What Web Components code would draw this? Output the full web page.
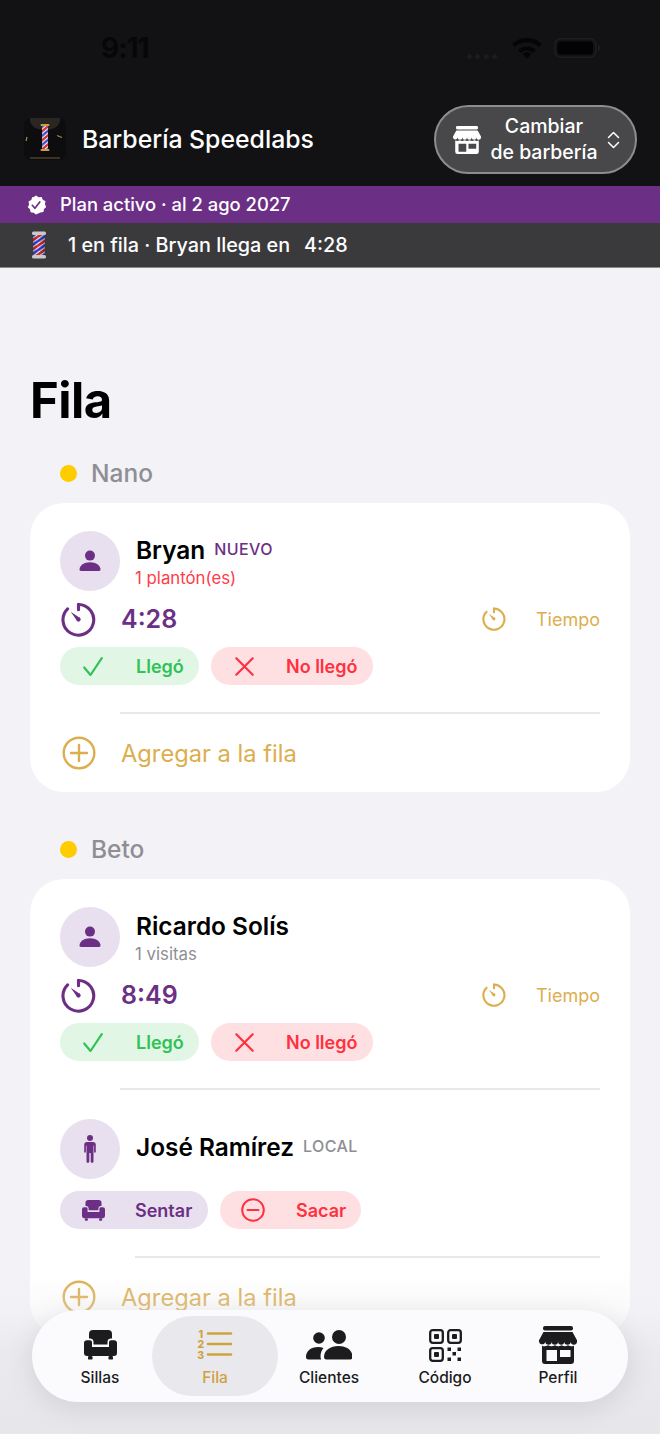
<!doctype html>
<html lang="es"><head><meta charset="utf-8"><title>Fila</title>
<style>
html,body{margin:0;padding:0;background:#f2f2f7}
body{width:660px;height:1434px;overflow:hidden;position:relative;font-family:Inter,"Liberation Sans",sans-serif}
</style></head><body>
<app-shell></app-shell>
<script>
const I={
 store:(c)=>`<svg viewBox="0 0 38 38" width="100%" height="100%" fill="${c}"><rect x="4" y="0" width="30" height="4.600" rx="2"/><path d="M4.500 6h29l4.500 8.200v1.300a3.150 3.150 0 0 1-6.300 0 3.150 3.150 0 0 1-6.350 0 3.150 3.150 0 0 1-6.300 0 3.150 3.150 0 0 1-6.350 0 3.150 3.150 0 0 1-6.350 0 3.200 3.200 0 0 1-6.350 0v-1.300z"/><path fill-rule="evenodd" d="M3 19.700c2.200 1 4.200.7 6-.5 2.400 1.500 4.700 1.500 7 0 2 1.500 4.400 1.500 6.500 0 2.200 1.500 4.500 1.500 6.500 0 1.800 1.200 3.800 1.500 6 .5V35a3 3 0 0 1-3 3H6a3 3 0 0 1-3-3zM7.500 24v11h10.500V24zM21 24v7h10.500v-7z"/></svg>`,
 person:`<svg viewBox="0 0 22 22" width="22" height="22" fill="#6b3085"><circle cx="11" cy="5.600" r="5"/><path d="M.5 19.600C.5 15.500 5 12.300 11 12.300s10.500 3.200 10.500 7.300c0 1-.5 1.400-1.500 1.400H2c-1 0-1.500-.4-1.500-1.400z"/></svg>`,
 figure:`<svg viewBox="0 0 12 28" width="12" height="28" fill="#6b3085"><circle cx="6" cy="3" r="3"/><path d="M2.800 7h6.400A2.500 2.500 0 0 1 11.800 9.500v7.300c0 1.300-1.700 1.300-1.700 0v-6h-.6V26.600c0 1.800-2.800 1.800-2.800 0V18h-1.400v8.600c0 1.800-2.800 1.800-2.800 0V10.800h-.6v6c0 1.300-1.700 1.300-1.700 0V9.500A2.500 2.500 0 0 1 2.800 7z"/></svg>`,
 timer:(c,s)=>`<svg viewBox="0 0 36 36" width="${s}" height="${s}" fill="none" stroke="${c}" stroke-width="3.200" stroke-linecap="round"><path d="M18 2.500A15.800 15.800 0 1 1 6.800 7"/><path d="M18 2.500V8"/><circle cx="18" cy="18" r="2.200" fill="${c}" stroke="none"/><path d="M10 10l9.600 6.500-3 3z" fill="${c}" stroke="none"/></svg>`,
 check:`<svg viewBox="0 0 20 19" width="20" height="19" fill="none" stroke="#30c257" stroke-width="2.200" stroke-linecap="round" stroke-linejoin="round"><path d="M1.200 10.500l6.300 7.500L18.800 1.200"/></svg>`,
 x:`<svg viewBox="0 0 19 19" width="19" height="19" fill="none" stroke="#ff3040" stroke-width="2.200" stroke-linecap="round"><path d="M1.300 1.300l16.400 16.400M17.700 1.300L1.300 17.700"/></svg>`,
 minus:`<svg viewBox="0 0 24 24" width="24" height="24" fill="none" stroke="#ff3040" stroke-width="2"><circle cx="12" cy="12" r="10.800"/><path d="M6.500 12h11" stroke-linecap="round"/></svg>`,
 plus:(c)=>`<svg viewBox="0 0 34 34" width="34" height="34" fill="none" stroke="${c}" stroke-width="2.400"><circle cx="17" cy="17" r="15.300"/><path d="M17 9v16M9 17h16" stroke-linecap="round"/></svg>`,
 sofa:(c,w,h)=>`<svg viewBox="0 0 33 30" width="${w}" height="${h}" fill="${c}"><path d="M9 0h15a4 4 0 0 1 4 4v4.500h-1.500a3.500 3.500 0 0 0-3 3.500v2.500H9.500V12a3.500 3.500 0 0 0-3-3.500H5V4a4 4 0 0 1 4-4z"/><path d="M3 10.300h3a2 2 0 0 1 2 2V17h17v-4.700a2 2 0 0 1 2-2h3a3 3 0 0 1 3 3V23a3 3 0 0 1-3 3H3a3 3 0 0 1-3-3V13.300a3 3 0 0 1 3-3z"/><rect x="4" y="26" width="4.500" height="3.600" rx="1.200"/><rect x="24.500" y="26" width="4.500" height="3.600" rx="1.200"/></svg>`,
 list:`<svg viewBox="0 0 36 32" width="36" height="32"><g fill="none" stroke="#cfa23f" stroke-width="2.600" stroke-linecap="round"><path d="M11 4.500h23M11 15h23M11 25.500h23"/></g><g fill="#cfa23f" font-family="Inter,sans-serif" font-weight="800" font-size="10.500" text-anchor="middle"><text x="3.800" y="8.500">1</text><text x="3.800" y="19">2</text><text x="3.800" y="29.500">3</text></g></svg>`,
 people:`<svg viewBox="0 0 46 30" width="46" height="30" fill="#1c1c1e"><circle cx="33" cy="7" r="7"/><path d="M18 27c0-7 6.500-11 14.500-11S46.500 20 46.500 27c0 1.600-.8 2.500-2.500 2.500H20.500C18.800 29.500 18 28.600 18 27z"/><circle cx="13" cy="8" r="5.800"/><path d="M0 27c0-6 5-10 12-10 2.100 0 3.900.3 5.500 1-1.800 2-3 5-3 8.500 0 1 .2 2.200.7 3H2.500C.8 29.500 0 28.600 0 27z"/></svg>`,
 qr:`<svg viewBox="0 0 33 33" width="33" height="33"><g fill="none" stroke="#1c1c1e" stroke-width="2.300"><rect x="1.200" y="1.200" width="12.600" height="12.600" rx="2.500"/><rect x="19.200" y="1.200" width="12.600" height="12.600" rx="2.500"/><rect x="1.200" y="19.200" width="12.600" height="12.600" rx="2.500"/></g><g fill="#1c1c1e"><rect x="5" y="5" width="5" height="5" rx="1"/><rect x="23" y="5" width="5" height="5" rx="1"/><rect x="5" y="23" width="5" height="5" rx="1"/><rect x="18.500" y="18.500" width="3.500" height="3.500"/><rect x="28.500" y="18.500" width="3.500" height="3.500"/><rect x="23.500" y="23" width="3.500" height="3.500"/><rect x="18.500" y="28.500" width="3.500" height="3.500"/><rect x="28.500" y="28.500" width="3.500" height="3.500"/></g></svg>`,
 pole:`<svg viewBox="0 0 16 28" width="16" height="28"><defs><pattern id="st" width="12" height="9" patternUnits="userSpaceOnUse" patternTransform="skewY(-35)"><rect width="12" height="9" fill="#f2f2f2"/><rect y="0" width="12" height="3" fill="#e02a2a"/><rect y="4.500" width="12" height="3" fill="#2636e0"/></pattern><linearGradient id="sh" x1="0" x2="1" y1="0" y2="0"><stop offset="0" stop-color="#000" stop-opacity=".3"/><stop offset=".4" stop-color="#000" stop-opacity="0"/><stop offset="1" stop-color="#000" stop-opacity=".35"/></linearGradient></defs><rect x="2" y="3" width="12" height="22" fill="url(#st)"/><rect x="2" y="3" width="12" height="22" fill="url(#sh)"/><rect x="1" y="0.500" width="14" height="3.500" rx="1.500" fill="#c9c9cc"/><rect x="1" y="24" width="14" height="3.500" rx="1.500" fill="#c9c9cc"/></svg>`,
 logo:`<svg viewBox="0 0 42 42" width="42" height="42"><rect width="42" height="42" rx="7" fill="#0d0d0f"/><path d="M6 0h30c1 7-5 12-15 12S5 7 6 0z" fill="#2a2621"/><rect x="6" y="39.500" width="30" height="1" fill="#6b5a30"/><path d="M3 19l-1 4M33 17.500l5 2" stroke="#a98a3c" stroke-width="1.200" fill="none"/><defs><pattern id="lg" width="6" height="9" patternUnits="userSpaceOnUse" patternTransform="skewY(-40)"><rect width="6" height="9" fill="#eee"/><rect y="0" width="6" height="3" fill="#d8333a"/><rect y="4.500" width="6" height="3" fill="#3450c8"/></pattern></defs><rect x="18" y="7" width="6" height="25" fill="url(#lg)"/><rect x="16.500" y="6" width="9" height="2" rx="1" fill="#c9a040"/><rect x="16.500" y="31" width="9" height="2" rx="1" fill="#c9a040"/></svg>`,
 badge:`<svg viewBox="0 0 20 20" width="20" height="20"><path fill="#fff" d="M10 .5l2.600 1.700 3-.2 1.200 2.800 2.700 1.400-.6 3 1.300 2.800-2.200 2-.6 3-3 .4L10 19.500l-2.400-1.800-3-.4-.6-3-2.200-2 1.300-2.800-.6-3 2.700-1.400L6.400 2l1 .2z"/><path d="M6.300 10.300l2.600 3 4.900-6.300" fill="none" stroke="#6b3085" stroke-width="1.700" stroke-linecap="round" stroke-linejoin="round"/></svg>`
};
function def(name,css,html){
 customElements.define(name,class extends HTMLElement{
  constructor(){super();this.attachShadow({mode:'open'})}
  connectedCallback(){
   const a=n=>this.getAttribute(n)||'';
   this.shadowRoot.innerHTML=`<style>${css}</style>`+(typeof html==='function'?html(a):html);
  }
 });
}
def('app-shell',`:host{display:block;width:660px;height:1434px;position:relative;overflow:hidden;background:#f2f2f7;color:#000;font-family:Inter,"Liberation Sans",sans-serif}
main{padding:105px 30px 0}
h1{margin:0;font-size:49px;line-height:56px;font-weight:700;letter-spacing:-.5px}
.stack{margin-top:29px}
queue-section+queue-section{margin-top:42px}
.fade{position:absolute;left:0;right:0;bottom:0;height:160px;background:linear-gradient(rgba(238,238,243,0),rgba(238,238,243,.34) 24%,rgba(232,232,237,.85) 48%,#e6e6eb);pointer-events:none}
tab-bar{position:absolute;left:32px;bottom:32px}`,
`<status-bar></status-bar><app-header></app-header><plan-banner></plan-banner><queue-banner></queue-banner>
<main><h1>Fila</h1>
<div class="stack">
<queue-section name="Nano">
 <queue-row name="Bryan" tag="NUEVO" tagc="#6b3085" sub="1 plantón(es)" subc="#ff3b4a" time="4:28"><action-pill kind="ok" label="Llegó"></action-pill><action-pill kind="no" label="No llegó"></action-pill></queue-row>
 <add-row></add-row>
</queue-section>
<queue-section name="Beto">
 <queue-row name="Ricardo Solís" sub="1 visitas" subc="#8e8e93" time="8:49"><action-pill kind="ok" label="Llegó"></action-pill><action-pill kind="no" label="No llegó"></action-pill></queue-row>
 <hr-line></hr-line>
 <queue-row name="José Ramírez" tag="LOCAL" tagc="#8e8e93"><action-pill kind="sit" label="Sentar"></action-pill><action-pill kind="out" label="Sacar"></action-pill></queue-row>
 <add-row left="75"></add-row>
</queue-section>
</div></main>
<div class="fade"></div>
<tab-bar></tab-bar>`);
def('status-bar',`:host{display:flex;align-items:center;height:105px;background:#121214;box-sizing:border-box;padding:0 59px 9px 101px;color:#070708}
.t{font-size:28px;font-weight:700;font-family:Inter,sans-serif;letter-spacing:-1px;flex:1}
.r{display:flex;align-items:center;gap:12px}.d{display:flex;gap:3.500px;margin-top:16px;margin-right:3px}.d i{width:5px;height:5px;border-radius:50%;background:#1c1c1e}`,
`<span class="t">9:11</span><div class="r"><div class="d"><i></i><i></i><i></i><i></i></div>
<svg width="30" height="21" viewBox="0 0 30 21" fill="#050506"><path d="M15 21l-4.500-5.200a6.500 6.500 0 0 1 9 0z"/><path d="M15 8.500c3.400 0 6.500 1.300 8.800 3.500l-2.600 2.900a9.300 9.300 0 0 0-12.400 0L6.200 12A12.700 12.700 0 0 1 15 8.500z"/><path d="M15 0c5.800 0 11 2.300 14.800 6L27.200 9A17.800 17.800 0 0 0 2.800 9L.2 6C4 2.300 9.200 0 15 0z"/></svg>
<svg width="47" height="20" viewBox="0 0 47 20"><rect x=".8" y=".8" width="41" height="18.400" rx="6" fill="none" stroke="#1e1e20" stroke-width="1.500"/><rect x="3.500" y="3.500" width="35.500" height="13" rx="3.500" fill="#030304"/><path d="M44 7v6c1.500-.4 2.500-1.600 2.500-3S45.500 7.400 44 7z" fill="#1e1e20"/></svg></div>`);
def('app-header',`:host{display:flex;align-items:flex-start;justify-content:space-between;background:#121214;height:81px;box-sizing:border-box;padding:0 23px 0 24px;color:#fff;font-family:Inter,sans-serif}
.l{display:flex;align-items:center;gap:16px;margin-top:13px}.n{font-size:24.800px;font-weight:500}
button{all:unset;display:flex;align-items:center;box-sizing:border-box;width:203px;height:69px;border:2px solid #8d8d90;border-radius:35px;background:#48484a;padding:0 15px 0 17px}
.i{width:28px;height:28px;flex:none}.c{flex:1;text-align:center;font-size:19.500px;line-height:26px;font-weight:500;color:#fff;margin-top:-1px}
svg.ch{flex:none}`,
`<div class="l">${I.logo}<span class="n">Barbería Speedlabs</span></div>
<button><span class="i">${I.store('#fff')}</span><span class="c">Cambiar<br>de barbería</span><svg class="ch" width="13" height="18" viewBox="0 0 13 18" fill="none" stroke="#fff" stroke-width="1.500" stroke-linecap="round" stroke-linejoin="round"><path d="M1.500 6.500L6.500 1.500l5 5M1.500 11.500l5 5 5-5"/></svg></button>`);
def('plan-banner',`:host{display:flex;align-items:center;height:37px;background:#6b3085;padding-left:26px;gap:14px;color:#fff;font-size:18.400px;font-weight:500;font-family:Inter,sans-serif}
span{margin-top:-2px}`,
`${I.badge}<span>Plan activo · al 2 ago 2027</span>`);
def('queue-banner',`:host{display:flex;align-items:center;height:45px;box-sizing:border-box;background:#3a3a3c;border-bottom:1px solid #8a8a8c;padding-left:31px;gap:21px;color:#fff;font-size:19.800px;font-weight:500;font-family:Inter,sans-serif}
b{font-weight:500;margin-left:14px}`,
`${I.pole}<span>1 en fila · Bryan llega en<b>4:28</b></span>`);
def('queue-section',`:host{display:block}
.h{display:flex;align-items:center;gap:14px;padding-left:30px;height:30px;margin-bottom:15px;color:#8e8e93;font-size:24.500px;font-weight:500}
.h i{width:17px;height:17px;border-radius:50%;background:#ffcc00}
.card{background:#fff;border-radius:34px;padding:28px 30px 0}`,
a=>`<div class="h"><i></i><span>${a('name')}</span></div><div class="card"><slot></slot></div>`);
def('hr-line',`:host{display:block;height:2px;background:#e8e8ea;margin:27px 0 29px 60px}`,'');
def('queue-row',`:host{display:block}
.top{display:flex;align-items:center;gap:16px}
.av{width:60px;height:60px;border-radius:50%;background:#e8e0ee;display:flex;align-items:center;justify-content:center;flex:none}
.nm{display:flex;align-items:center;gap:9px;height:34px}.nm b{font-size:24.400px;font-weight:600;color:#000}.tag{font-size:16px;font-weight:500;letter-spacing:.4px;margin-top:-2px}
.sub{font-size:16.800px;line-height:20px;margin-top:1px;margin-left:-1px}
.tm{display:flex;align-items:center;height:38px;margin-top:9px}.tm .ic{width:36px;display:flex;justify-content:center}.tm b{margin-left:25px;font-size:25px;font-weight:600;color:#6b3085;flex:1}
.tp{display:flex;align-items:center;gap:30px;color:#dcae4d;font-size:18px}
.acts{display:flex;gap:12px;margin-top:9px}`,
a=>`<div class="top"><div class="av">${a('sub')?I.person:I.figure}</div><div style="${a('sub')?'margin-top:-2px':'margin-top:-4px'}"><div class="nm"><b>${a('name')}</b>${a('tag')?`<span class="tag" style="color:${a('tagc')}">${a('tag')}</span>`:''}</div>${a('sub')?`<div class="sub" style="color:${a('subc')}">${a('sub')}</div>`:''}</div></div>
${a('time')?`<div class="tm"><span class="ic">${I.timer('#6b3085',35)}</span><b>${a('time')}</b><span class="tp">${I.timer('#dcae4d',24)}<span>Tiempo</span></span></div>`:''}
<div class="acts" style="${a('time')?'':'margin-top:12px'}"><slot></slot></div>`);
const P={ok:['#e2f6e6','#30c257',I.check,139,21,31],no:['#ffe0e2','#ff3040',I.x,162,21,30],sit:['#e8e0ee','#6b3085',I.sofa('#6b3085',23,21),148,21,30],out:['#ffe0e2','#ff3040',I.minus,141,21,31]};
def('action-pill',`:host{display:block}
div{height:38px;border-radius:19px;display:flex;align-items:center;box-sizing:border-box;font-size:18px;font-weight:560}
.ic{display:flex;width:24px;justify-content:center}`,
a=>{const p=P[a('kind')];return `<div style="background:${p[0]};color:${p[1]};width:${p[3]}px;padding-left:${p[4]}px"><span class="ic">${p[2]}</span><span style="margin-left:${p[5]}px;white-space:nowrap">${a('label')}</span></div>`});
def('add-row',`:host{display:block}
.s{height:2px;background:#e8e8ea;margin:27px 0 0 0}
.r{display:flex;align-items:center;gap:25px;height:78px;padding-left:2px;color:#dcae4d;font-size:23.700px}`,
a=>`<div class="s" style="margin-left:${a('left')||60}px"></div><div class="r">${I.plus('#dcae4d')}<span>Agregar a la fila</span></div>`);
def('tab-item',`:host{display:flex;flex-direction:column;align-items:center;box-sizing:border-box;height:80px;padding-top:10px;border-radius:40px;color:#1c1c1e;font-size:15.500px;font-weight:500}
:host([on]){background:#e9e9ed;color:#cfa23f}
.ic{height:38px;display:flex;align-items:center;justify-content:center}
span{margin-top:4px}`,a=>`<div class="ic"><slot></slot></div><span>${a('label')}</span>`);
def('tab-bar',`:host{display:grid;grid-template-columns:120px 126px 102px 130px 1fr;align-items:center;width:596px;height:92px;box-sizing:border-box;padding:0 6px 0 0;border-radius:46px;background:#fbfbfd;box-shadow:0 6px 30px rgba(0,0,0,.1)}`,
`<tab-item label="Sillas" style="padding-left:16px">${I.sofa('#1c1c1e',33,30)}</tab-item>
<tab-item label="Fila" on>${I.list}</tab-item>
<tab-item label="Clientes">${I.people}</tab-item>
<tab-item label="Código">${I.qr}</tab-item>
<tab-item label="Perfil" style="padding-right:16px"><span style="display:block;width:38px;height:38px">${I.store('#1c1c1e')}</span></tab-item>`);
</script></body></html>
